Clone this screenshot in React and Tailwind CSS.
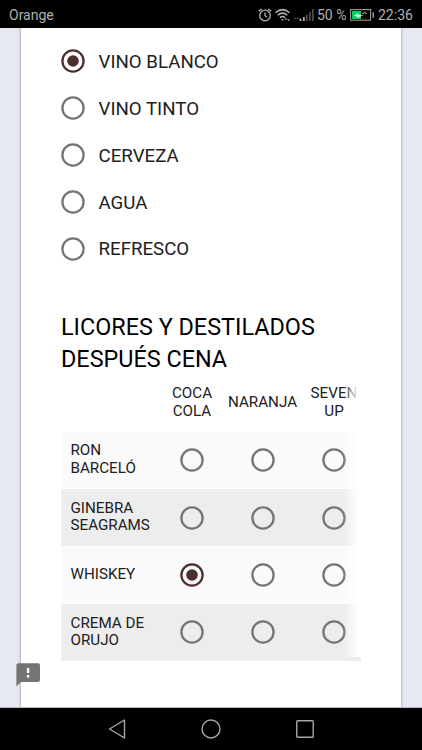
import { useState } from "react";

const drinks = ["VINO BLANCO", "VINO TINTO", "CERVEZA", "AGUA", "REFRESCO"];
const mixers = ["COCA COLA", "NARANJA", "SEVEN UP"];
const spirits = ["RON BARCELÓ", "GINEBRA SEAGRAMS", "WHISKEY", "CREMA DE ORUJO"];

function Radio({ checked, onClick }) {
    return (
        <button type="button" role="radio" aria-checked={checked} onClick={onClick} className="block size-6 shrink-0">
            <svg viewBox="0 0 24 24" className={checked ? "size-6 text-[#4b302e]" : "size-6 text-[#757575]"}>
                <circle cx="12" cy="12" r="10.6" fill="none" stroke="currentColor" strokeWidth="2.3" />
                {checked && <circle cx="12" cy="12" r="5.8" fill="currentColor" />}
            </svg>
        </button>
    );
}

function StatusBar() {
    return (
        <header className="flex h-7 items-center bg-black pt-0.5 pl-[9px] text-[14px] leading-none text-[#b0b0b0]">
            <span className="w-[249px]">Orange</span>

            {/* Alarm */}
            <svg className="h-[14px] w-[14px] shrink-0" viewBox="0 0 14 14" fill="none" stroke="currentColor" strokeWidth="1.3">
                <circle cx="7" cy="7.5" r="5.3" />
                <path d="M7 4.5v3.2l2.2 1.5M.8 3.3 3.6.9M13.2 3.3 10.4.9" />
            </svg>

            {/* Wifi */}
            <svg className="ml-[3px] h-[14px] w-[16px] shrink-0" viewBox="0 0 16 14" fill="none" stroke="currentColor" strokeWidth="1.5">
                <path d="M.5 4.7Q7.5-1.4 14.5 4.7M2.7 7.2q4.8-4.2 9.6 0M4.9 9.6q2.6-2.2 5.2 0" />
                <path d="M6 11.2h3l-1.5 1.9z" fill="currentColor" stroke="none" />
                <path d="M9.6 11.5 11 9.7l1.3 1.8zM12.2 11.4h2.8l-1.4 1.9z" fill="currentColor" stroke="none" />
            </svg>

            {/* Signal */}
            <svg className="ml-[3px] h-[14px] w-[21px] shrink-0" viewBox="0 0 21 14">
                <path d="M0 9.5h1.6V11H0zM2.6 9.5h1.6V11H2.6z" fill="#555" />
                <path d="M5.6 10.5h1.8V13H5.6zM9 9h1.8v4H9z" fill="#aaa" />
                <path d="M12 6.5h1.8V13H12zM15 4h1.8v9H15zM18 1h1.8v12H18z" fill="#484848" />
            </svg>

            <span className="ml-[2px] w-[33px] whitespace-nowrap">50 %</span>

            {/* Battery */}
            <svg className="h-3 w-[25px] shrink-0" viewBox="0 0 25 12">
                <rect x=".6" y=".6" width="20" height="10.6" fill="none" stroke="#999" strokeWidth="1.1" />
                <path d="M2 2h9v8H2z" fill="#00cf5a" />
                <path d="m4 6.5 4.2-2.2v1.5H11v1.6H9.2V9z" fill="#dff8e8" />
                <path d="M11 6.6h2.2M12 4.6h2V3.2h1.5v1.4H17" fill="none" stroke="#999" />
                <path d="M22.5 3.3H24v5.4h-1.5z" fill="#999" />
            </svg>

            <span className="ml-[3px]">22:36</span>
        </header>
    );
}

function NavBar() {
    return (
        <nav className="flex h-[42px] items-center bg-black pl-[108px] text-[#a8a8a8]">
            <svg className="h-5 w-[18px]" viewBox="0 0 18 20" fill="none" stroke="currentColor" strokeWidth="1.4" strokeLinejoin="round">
                <path d="M16.5 1v18L1.5 10z" />
            </svg>
            <svg className="ml-[75px] size-5" viewBox="0 0 20 20" fill="none" stroke="currentColor" strokeWidth="1.4">
                <circle cx="10" cy="10" r="9" />
            </svg>
            <svg className="ml-[75px] size-[18px]" viewBox="0 0 18 18" fill="none" stroke="currentColor" strokeWidth="1.4">
                <rect x=".8" y=".8" width="16.4" height="16.4" rx=".8" />
            </svg>
        </nav>
    );
}

function App() {
    const [drink, setDrink] = useState("VINO BLANCO");
    const [mixes, setMixes] = useState({ WHISKEY: "COCA COLA" });

    return (
        <div className="flex h-[750px] w-[422px] flex-col overflow-hidden bg-black font-['Roboto',sans-serif]">
            <StatusBar />

            <main className="relative h-[680px] overflow-hidden border-b border-[#bbb] bg-[#e6e9f1]">
                <div className="mx-[21px] h-full bg-white px-10 pt-[10px] shadow-[0_0_2px_1px_rgba(0,0,0,0.22)]">
                    {/* Drink options */}
                    <div role="radiogroup">
                        {drinks.map((name) => (
                            <div key={name} className="flex h-[46.9px] items-center gap-[13.5px]">
                                <Radio checked={drink === name} onClick={() => setDrink(name)} />
                                <span className="pt-px text-[18.7px] text-[#212121]">{name}</span>
                            </div>
                        ))}
                    </div>

                    <h2 className="mt-[40px] text-[23.4px] leading-[31.3px] whitespace-nowrap text-black">
                        LICORES Y DESTILADOS
                        <br />
                        DESPUÉS CENA
                    </h2>

                    {/* Grid question */}
                    <div className="relative -mt-px w-[300px] overflow-hidden text-[15.2px] leading-[17.4px] text-[#212121]">
                        <div className="grid h-[57px] grid-cols-[96px_70px_71px_72px] items-center text-center">
                            <span />
                            {mixers.map((mixer) => (
                                <span key={mixer} className="flex justify-center px-3">{mixer}</span>
                            ))}
                        </div>
                        {spirits.map((spirit) => (
                            <div
                                key={spirit}
                                className="grid h-[57.4px] grid-cols-[96px_70px_71px_72px] items-center justify-items-center border-t border-white odd:bg-[#ededed] even:bg-[#fafafa]"
                            >
                                <span className="w-full pr-1 pb-px pl-[9.5px]">{spirit}</span>
                                {mixers.map((mixer) => (
                                    <Radio
                                        key={mixer}
                                        checked={mixes[spirit] === mixer}
                                        onClick={() => setMixes({ ...mixes, [spirit]: mixer })}
                                    />
                                ))}
                            </div>
                        ))}
                        <div className="pointer-events-none absolute top-0 right-0 bottom-1 w-[18px] bg-linear-to-r from-white/0 to-white to-85%" />
                    </div>
                </div>

                {/* Feedback */}
                <button type="button" className="absolute bottom-[20px] left-4" aria-label="Feedback">
                    <svg className="h-6 w-6" viewBox="0 0 24 24">
                        <path
                            fill="#747474"
                            d="M2 .2h20a2 2 0 0 1 2 2V17a2 2 0 0 1-2 2H5L.4 23.4V2.2a2 2 0 0 1 1.6-2z"
                        />
                        <path fill="#fff" d="M10.9 5h2.4v5h-2.4zM10.9 12h2.4v2.4h-2.4z" />
                    </svg>
                </button>
            </main>

            <NavBar />
        </div>
    );
}

export default App;
